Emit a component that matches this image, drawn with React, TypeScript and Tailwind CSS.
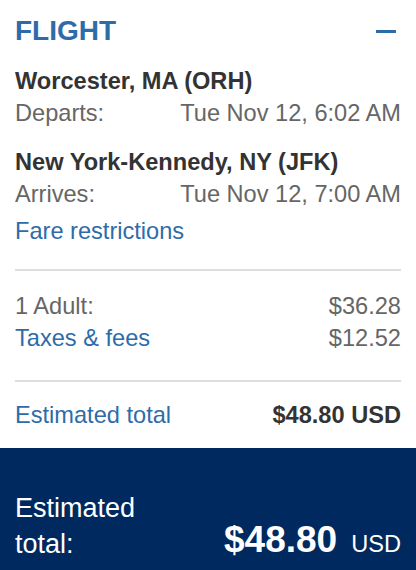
const font = { fontFamily: '"Liberation Sans", Arial, Helvetica, sans-serif' }

function Row({
  label,
  value,
  labelClass = 'text-[#666]',
  valueClass = 'text-[#666]',
  className = '',
}: {
  label: string
  value: string
  labelClass?: string
  valueClass?: string
  className?: string
}) {
  return (
    <div className={`flex justify-between text-[23.6px] leading-[31.5px] ${className}`}>
      <span className={labelClass}>{label}</span>
      <span className={valueClass}>{value}</span>
    </div>
  )
}

function Divider({ className = '' }: { className?: string }) {
  return <div className={`h-[2px] bg-[#dedede] ${className}`} />
}

export default function App() {
  return (
    <div className="w-[416px] h-[570px] overflow-hidden bg-white flex flex-col" style={font}>
      <div className="px-[15px] pt-[15px]">
        <div className="flex items-center justify-between">
          <h2 className="text-[28px] leading-[32px] font-bold text-[#2e6ca9]">FLIGHT</h2>
          <div className="w-[20px] h-[3px] bg-[#2e6ca9] mr-[5px] mt-[1px]" />
        </div>

        <div className="mt-[19px] text-[23.6px] leading-[31.5px] font-bold text-[#333]">
          Worcester, MA (ORH)
        </div>
        <Row label="Departs:" value="Tue Nov 12, 6:02 AM" />

        <div className="mt-[18px] text-[23.6px] leading-[31.5px] font-bold text-[#333]">
          New York-Kennedy, NY (JFK)
        </div>
        <Row label="Arrives:" value="Tue Nov 12, 7:00 AM" />

        <div className="mt-[6px] text-[23.6px] leading-[31.5px] text-[#2e6ca9]">
          Fare restrictions
        </div>

        <Divider className="mt-[21px]" />

        <Row className="mt-[20px]" label="1 Adult:" value="$36.28" />
        <Row
          className="mt-[1px]"
          label="Taxes & fees"
          labelClass="text-[#2e6ca9]"
          value="$12.52"
        />

        <Divider className="mt-[25px]" />

        <Row
          className="mt-[18px]"
          label="Estimated total"
          labelClass="text-[#2e6ca9]"
          value="$48.80 USD"
          valueClass="font-bold text-[#333]"
        />
      </div>

      <div className="mt-[17px] flex-1 bg-[#002a5f] px-[15px] pt-[42px] pb-[8px] flex items-end justify-between text-white">
        <div className="w-[150px] text-[27px] leading-[36px]">Estimated total:</div>
        <div className="mb-[4px] leading-none whitespace-nowrap">
          <span className="text-[37px] font-bold">$48.80</span>
          <span className="text-[23.6px] ml-[14px]">USD</span>
        </div>
      </div>
    </div>
  )
}
